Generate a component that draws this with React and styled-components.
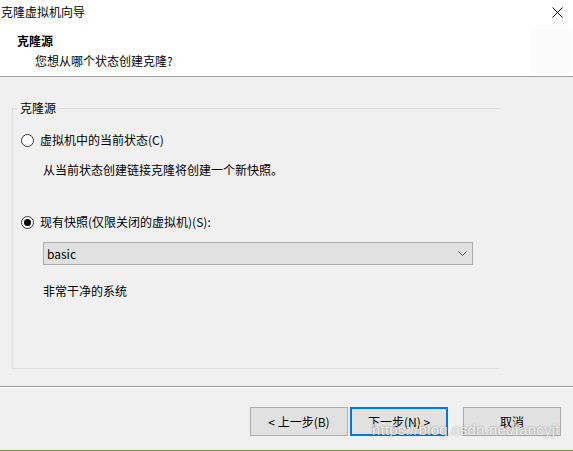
import React from "react";
import styled, { createGlobalStyle } from "styled-components";

const GlobalStyle = createGlobalStyle`
  html, body {
    margin: 0;
    padding: 0;
    background: #f0f0f0;
  }
  * {
    box-sizing: border-box;
  }
`;

const FONT = `"Noto Sans CJK SC", "Noto Sans", sans-serif`;

const Window = styled.div`
  position: relative;
  width: 573px;
  height: 451px;
  display: flex;
  flex-direction: column;
  background: #f0f0f0;
  border-bottom: 1px solid #649a2c;
  font-family: ${FONT};
  font-size: 12px;
  line-height: 16px;
  color: #000;
  overflow: hidden;
`;

const Top = styled.div`
  background: #fff;
  border-bottom: 1px solid #a0a0a0;
  height: 77px;
`;

const TitleBar = styled.div`
  height: 24px;
  display: flex;
  align-items: center;
  justify-content: space-between;
  padding: 0 10px 0 1px;
`;

const TitleText = styled.span`
  font-size: 12px;
`;

const HeaderBody = styled.div`
  height: 52px;
  display: flex;
  justify-content: space-between;
`;

const HeaderText = styled.div`
  padding: 9px 0 0 17px;
  display: flex;
  flex-direction: column;
  gap: 4px;
`;

const HeaderTitle = styled.div`
  font-weight: bold;
`;

const HeaderSub = styled.div`
  padding-left: 18px;
`;

const IconSlot = styled.div`
  width: 42px;
  height: 44px;
  margin: 5px 1px 0 0;
  background: #fbfbfb;
`;

const Body = styled.div`
  padding: 23px 0 0 12px;
`;

const Group = styled.fieldset`
  margin: 0;
  padding: 16px 0 0 0;
  width: 487px;
  height: 269px;
  border: 1px solid #dcdcdc;
  border-right: none;
  min-inline-size: 0;
`;

const Legend = styled.legend`
  margin-left: 5px;
  padding: 0 2px;
  line-height: 16px;
`;

const RadioRow = styled.label`
  display: flex;
  align-items: center;
  gap: 6px;
  padding-left: 8px;
  height: 16px;
  margin-top: ${(p) => p.$top || 0}px;
`;

const RadioCircle = styled.span`
  width: 13px;
  height: 13px;
  border-radius: 50%;
  border: 1px solid #333;
  background: #fff;
  display: flex;
  align-items: center;
  justify-content: center;
  &::after {
    content: "";
    width: 7px;
    height: 7px;
    border-radius: 50%;
    background: ${(p) => (p.$checked ? "#000" : "transparent")};
  }
`;

const Indented = styled.div`
  padding-left: 30px;
  margin-top: ${(p) => p.$top || 0}px;
`;

const Select = styled.div`
  margin: 12px 0 0 30px;
  width: 430px;
  height: 23px;
  border: 1px solid #adadad;
  background: #e1e1e1;
  display: flex;
  align-items: center;
  justify-content: space-between;
  padding: 0 5px 0 3px;
`;

const Separator = styled.div`
  margin-top: 17px;
  height: 2px;
  border-top: 1px solid #a0a0a0;
  border-bottom: 1px solid #fff;
`;

const Footer = styled.div`
  flex: 1;
  display: flex;
  justify-content: flex-end;
  align-items: flex-start;
  padding: 19px 12px 0 0;
`;

const Button = styled.button`
  width: 98px;
  height: 29px;
  margin-left: ${(p) => p.$gap || 0}px;
  background: #e1e1e1;
  border: ${(p) => (p.$primary ? "2px solid #0078d7" : "1px solid #adadad")};
  font-family: ${FONT};
  font-size: 12px;
  color: #000;
  padding: 0;
  cursor: default;
`;

// csdn watermark pasted over the screenshot
const Watermark = styled.div`
  position: absolute;
  left: 372px;
  top: 422px;
  font-family: "Liberation Sans", Arial, sans-serif;
  font-size: 15px;
  letter-spacing: 0.2px;
  color: rgba(255, 255, 255, 0.85);
  text-shadow: 0 0 2px rgba(0, 0, 0, 0.45);
  pointer-events: none;
`;

const CloseIcon = () => (
  <svg width="11" height="11" viewBox="0 0 11 11">
    <path d="M0.5 0.5 L10.5 10.5 M10.5 0.5 L0.5 10.5" stroke="#000" strokeWidth="1" />
  </svg>
);

const Chevron = () => (
  <svg width="9" height="5" viewBox="0 0 9 5">
    <path d="M0.5 0.5 L4.5 4.5 L8.5 0.5" stroke="#444" strokeWidth="1" fill="none" />
  </svg>
);

export default function App() {
  return (
    <>
      <GlobalStyle />
      <Window>
        <Top>
          <TitleBar>
            <TitleText>克隆虚拟机向导</TitleText>
            <CloseIcon />
          </TitleBar>
          <HeaderBody>
            <HeaderText>
              <HeaderTitle>克隆源</HeaderTitle>
              <HeaderSub>您想从哪个状态创建克隆?</HeaderSub>
            </HeaderText>
            <IconSlot />
          </HeaderBody>
        </Top>

        <Body>
          <Group>
            <Legend>克隆源</Legend>
            <RadioRow>
              <RadioCircle />
              <span>虚拟机中的当前状态(C)</span>
            </RadioRow>
            <Indented $top={14}>从当前状态创建链接克隆将创建一个新快照。</Indented>
            <RadioRow $top={36}>
              <RadioCircle $checked />
              <span>现有快照(仅限关闭的虚拟机)(S):</span>
            </RadioRow>
            <Select>
              <span>basic</span>
              <Chevron />
            </Select>
            <Indented $top={18}>非常干净的系统</Indented>
          </Group>
        </Body>
        <Separator />

        <Footer>
          <Button>&lt; 上一步(B)</Button>
          <Button $primary $gap={2}>下一步(N) &gt;</Button>
          <Button $gap={15}>取消</Button>
        </Footer>
        <Watermark>https://blog.csdn.net/fancyjt</Watermark>
      </Window>
    </>
  );
}
